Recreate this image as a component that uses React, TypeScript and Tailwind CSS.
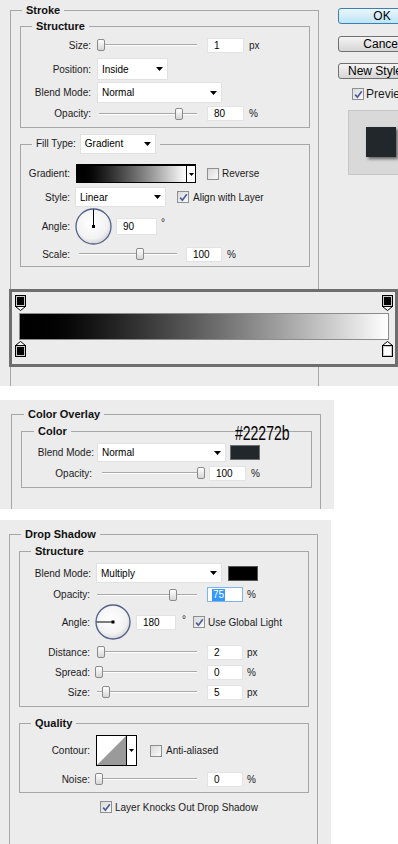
import React from 'react';

type Kids = { children?: React.ReactNode; className?: string };

const Group = ({ title, className = '', legendClass = 'ml-[11px]', children }: Kids & { title: React.ReactNode; legendClass?: string }) => (
  <fieldset className={`border border-[#a6a6a6] ${className}`}>
    <legend className={`${legendClass} px-[4px] text-[11px] font-bold leading-[12px] text-[#111]`}>{title}</legend>
    {children}
  </fieldset>
);

const Lbl = ({ className = '', children }: Kids) => (
  <span className={`shrink-0 text-right text-[10px] text-[#1b1b1b] ${className}`}>{children}</span>
);

const Slider = ({ className = '', thumb }: Kids & { thumb: number }) => (
  <div className={`relative h-[14px] flex items-center shrink-0 ${className}`}>
    <div className="h-[2px] w-full border-t border-[#a9a9a9] bg-white" />
    <div
      className="absolute top-[1px] h-[12px] w-[8px] rounded-[2px] border border-[#8a8a8a] bg-linear-to-b from-white to-[#d6d6d6]"
      style={{ left: thumb }}
    />
  </div>
);

const Field = ({ className = '', value }: Kids & { value: string }) => (
  <div className={`h-[15px] shrink-0 bg-white border border-[#e3e3e3] pl-[6px] text-[10px] leading-[13px] text-black ${className}`}>
    {value}
  </div>
);

const Arrow = () => (
  <svg width="7" height="4" viewBox="0 0 7 4">
    <path d="M0 0h7L3.5 4z" fill="#000" />
  </svg>
);

const Select = ({ className = '', value }: Kids & { value: string }) => (
  <div className={`flex shrink-0 items-center justify-between bg-white border border-[#e1e1e1] pl-[4px] pr-[4px] text-[10px] text-black ${className}`}>
    <span>{value}</span>
    <Arrow />
  </div>
);

const Check = ({ checked = false }: { checked?: boolean }) => (
  <div className="w-[12px] h-[12px] shrink-0 border border-[#8e8f8f] bg-linear-to-br from-[#d9d9d9] to-[#fbfbfb] flex items-center justify-center">
    {checked && (
      <svg width="9" height="9" viewBox="0 0 9 9">
        <path d="M1.2 4.6 L3.4 7.2 L7.8 1.2" fill="none" stroke="#4a5f97" strokeWidth="1.7" />
      </svg>
    )}
  </div>
);

const Dial = ({ size, dir, id }: { size: number; dir: 'up' | 'left'; id: string }) => {
  const c = size / 2;
  return (
    <svg width={size} height={size} viewBox={`0 0 ${size} ${size}`} className="shrink-0">
      <defs>
        <radialGradient id={id} cx="45%" cy="40%" r="60%">
          <stop offset="0%" stopColor="#ffffff" />
          <stop offset="75%" stopColor="#f2f2f2" />
          <stop offset="100%" stopColor="#d6d6d6" />
        </radialGradient>
      </defs>
      <circle cx={c} cy={c} r={c - 1} fill={`url(#${id})`} stroke="#52618a" strokeWidth="1.3" />
      {dir === 'up' ? (
        <line x1={c} y1={c} x2={c} y2={1.5} stroke="#000" strokeWidth="1" />
      ) : (
        <line x1={c} y1={c} x2={1.5} y2={c} stroke="#000" strokeWidth="1" />
      )}
      <rect x={c - 1.5} y={c - 1.5} width="3" height="3" fill="#000" />
    </svg>
  );
};

const TopStop = () => (
  <svg width="11" height="16" viewBox="0 0 11 16">
    <path d="M0.5 11.5 L5.5 15.5 L10.5 11.5" fill="#fff" stroke="#000" />
    <rect x="0.5" y="0.5" width="10" height="11" fill="#c8c8c8" stroke="#000" />
    <rect x="2" y="2" width="7" height="8" fill="#000" />
  </svg>
);

const BottomStop = ({ fill }: { fill: string }) => (
  <svg width="11" height="16" viewBox="0 0 11 16">
    <path d="M0.5 4.5 L5.5 0.5 L10.5 4.5" fill="#fff" stroke="#000" />
    <rect x="0.5" y="4.5" width="10" height="11" fill="#c8c8c8" stroke="#000" />
    <rect x="2" y="6" width="7" height="8" fill={fill} />
  </svg>
);

const Btn = ({ children, primary = false, className = '' }: Kids & { primary?: boolean }) => (
  <div
    className={`w-[88px] h-[16px] shrink-0 rounded-[3px] border text-[12px] leading-[14px] text-black ${
      primary
        ? 'border-[#3c7fb1] bg-linear-to-b from-[#eaf6fd] to-[#bde4f8]'
        : 'border-[#707070] bg-linear-to-b from-[#f4f4f4] to-[#d6d6d6]'
    } ${className}`}
  >
    {children}
  </div>
);

const StrokePanel = () => (
  <div className="h-[386px] w-full shrink-0 bg-[#ececec] flex flex-col overflow-hidden">
    <div className="flex h-[289px] shrink-0">
      <div className="w-[338px] shrink-0 pl-[10px] pt-[4px]">
        <Group title="Stroke" className="w-[309px] h-full border-b-0">
          <Group title="Structure" className="mt-[4px] ml-[9px] w-[290px] pb-[5px]">
            <div className="mt-[5px] h-[16px] flex items-center">
              <Lbl className="w-[70px]">Size:</Lbl>
              <Slider className="ml-[6px] w-[100px]" thumb={0} />
              <Field className="ml-[10px] w-[37px]" value="1" />
              <span className="ml-[5px] text-[10px]">px</span>
            </div>
            <div className="mt-[5px] h-[22px] flex items-center">
              <Lbl className="w-[70px]">Position:</Lbl>
              <Select className="ml-[6px] w-[71px] h-[22px]" value="Inside" />
            </div>
            <div className="mt-[2px] h-[21px] flex items-center">
              <Lbl className="w-[70px]">Blend Mode:</Lbl>
              <Select className="ml-[6px] w-[125px] h-[21px]" value="Normal" />
            </div>
            <div className="mt-[2px] h-[17px] flex items-center">
              <Lbl className="w-[70px]">Opacity:</Lbl>
              <Slider className="ml-[8px] w-[98px]" thumb={76} />
              <Field className="ml-[10px] w-[37px]" value="80" />
              <span className="ml-[5px] text-[10px]">%</span>
            </div>
          </Group>

          <Group
            className="mt-[6px] ml-[9px] w-[290px] pb-[4px]"
            legendClass="ml-[11px]"
            title={
              <div className="flex items-center h-[20px] font-normal">
                <span className="text-[10px] text-[#1b1b1b]">Fill Type:</span>
                <Select className="ml-[4px] w-[76px] h-[20px]" value="Gradient" />
              </div>
            }
          >
            <div className="mt-[10px] h-[19px] flex items-center">
              <Lbl className="w-[49px]">Gradient:</Lbl>
              <div className="ml-[6px] w-[120px] h-[19px] shrink-0 flex border-2 border-black border-r border-b">
                <div className="flex-1 bg-linear-to-r from-black to-white" />
                <div className="w-[9px] bg-white border-l border-black flex items-center justify-center">
                  <svg width="5" height="3" viewBox="0 0 5 3">
                    <path d="M0 0h5L2.5 3z" fill="#000" />
                  </svg>
                </div>
              </div>
              <div className="ml-[11px]">
                <Check />
              </div>
              <span className="ml-[3px] text-[10px]">Reverse</span>
            </div>
            <div className="mt-[4px] h-[20px] flex items-center">
              <Lbl className="w-[49px]">Style:</Lbl>
              <Select className="ml-[5px] w-[91px] h-[20px]" value="Linear" />
              <div className="ml-[11px]">
                <Check checked />
              </div>
              <span className="ml-[4px] text-[10px]">Align with Layer</span>
            </div>
            <div className="h-[39px] flex items-center">
              <Lbl className="w-[49px]">Angle:</Lbl>
              <div className="ml-[5px]">
                <Dial size={37} dir="up" id="dial1" />
              </div>
              <Field className="ml-[4px] w-[41px] h-[17px] leading-[15px]" value="90" />
              <span className="ml-[4px] self-start mt-[11px] text-[10px] leading-[10px]">°</span>
            </div>
            <div className="h-[16px] flex items-center">
              <Lbl className="w-[49px]">Scale:</Lbl>
              <Slider className="ml-[9px] w-[98px]" thumb={57} />
              <Field className="ml-[9px] w-[36px]" value="100" />
              <span className="ml-[5px] text-[10px]">%</span>
            </div>
          </Group>
        </Group>
      </div>

      <div className="flex-1 overflow-hidden pt-[8px] flex flex-col">
        <Btn primary className="text-center">OK</Btn>
        <Btn className="mt-[12px] text-center">Cancel</Btn>
        <Btn className="mt-[11px] pl-[9px]">New Style...</Btn>
        <div className="mt-[9px] ml-[14px] h-[12px] flex items-center">
          <Check checked />
          <span className="ml-[2px] text-[12px] whitespace-nowrap">Preview</span>
        </div>
        <div className="mt-[10px] ml-[10px] w-[70px] h-[65px] shrink-0 bg-[#d9d9d9] border border-[#c6c6c6] pt-[16px] pl-[17px]">
          <div className="w-[30px] h-[30px] bg-[#22272b] shadow-[2px_2px_3px_rgba(0,0,0,0.55)]" />
        </div>
      </div>
    </div>

    <div className="ml-[9px] w-[389px] h-[78px] shrink-0 border-[3px] border-[#6e6e6e] bg-[#ececec] flex flex-col">
      <div className="mt-[3px] h-[16px] pl-[3px] pr-[2px] flex justify-between">
        <TopStop />
        <TopStop />
      </div>
      <div className="mt-[2px] ml-[7px] mr-[6px] h-[27px] border border-[#8c8c8c] bg-linear-to-r from-black to-white" />
      <div className="mt-[1px] h-[16px] pl-[3px] pr-[2px] flex justify-between">
        <BottomStop fill="#000" />
        <BottomStop fill="#fff" />
      </div>
    </div>

    <div className="ml-[10px] w-[309px] flex-1 border-l border-r border-[#a6a6a6]" />
  </div>
);

const OverlayPanel = () => (
  <div className="relative mt-[14px] w-[334px] h-[109px] shrink-0 bg-[#ececec] pl-[11px] pt-[8px] overflow-hidden">
    <Group title="Color Overlay" legendClass="ml-[12px]" className="w-[310px] h-full border-b-0">
      <Group title="Color" legendClass="ml-[12px]" className="mt-[5px] ml-[9px] w-[291px] pb-[6px]">
        <div className="mt-[6px] h-[19px] flex items-center">
          <Lbl className="w-[72px]">Blend Mode:</Lbl>
          <Select className="ml-[3px] w-[129px] h-[19px]" value="Normal" />
          <div className="ml-[4px] w-[30px] h-[15px] shrink-0 bg-[#22272b] border border-[#6f6f6f]" />
        </div>
        <div className="mt-[3px] h-[16px] flex items-center">
          <Lbl className="w-[70px]">Opacity:</Lbl>
          <Slider className="ml-[10px] w-[102px]" thumb={95} />
          <Field className="ml-[5px] w-[37px]" value="100" />
          <span className="ml-[5px] text-[10px]">%</span>
        </div>
      </Group>
    </Group>
    <span className="absolute left-[235px] top-[23px] text-[20px] leading-[20px] origin-left scale-x-[0.7] text-black whitespace-nowrap">
      #22272b
    </span>
  </div>
);

const ShadowPanel = () => (
  <div className="mt-[11px] w-[331px] flex-1 bg-[#ececec] pl-[9px] pt-[8px] overflow-hidden">
    <Group title="Drop Shadow" className="w-[309px] h-full border-b-0">
      <Group title="Structure" className="mt-[5px] ml-[9px] w-[290px] pb-[6px]">
        <div className="mt-[6px] h-[20px] flex items-center">
          <Lbl className="w-[71px]">Blend Mode:</Lbl>
          <Select className="ml-[5px] w-[126px] h-[20px]" value="Multiply" />
          <div className="ml-[6px] w-[30px] h-[15px] shrink-0 bg-black border border-[#555]" />
        </div>
        <div className="mt-[3px] h-[17px] flex items-center">
          <Lbl className="w-[70px]">Opacity:</Lbl>
          <Slider className="ml-[7px] w-[100px]" thumb={72} />
          <div className="ml-[10px] w-[36px] h-[15px] shrink-0 bg-white border border-[#7eb4ea] pl-[4px] flex items-center">
            <span className="bg-[#3399ff] text-white text-[10px] leading-[12px] px-[1px]">75</span>
          </div>
          <span className="ml-[4px] text-[10px]">%</span>
        </div>
        <div className="h-[38px] flex items-center">
          <Lbl className="w-[70px]">Angle:</Lbl>
          <div className="ml-[5px]">
            <Dial size={36} dir="left" id="dial2" />
          </div>
          <Field className="ml-[5px] w-[40px]" value="180" />
          <span className="ml-[6px] self-start mt-[12px] text-[10px] leading-[10px]">°</span>
          <div className="ml-[7px]">
            <Check checked />
          </div>
          <span className="ml-[3px] text-[10px]">Use Global Light</span>
        </div>
        <div className="mt-[3px] h-[16px] flex items-center">
          <Lbl className="w-[70px]">Distance:</Lbl>
          <Slider className="ml-[7px] w-[100px]" thumb={0} />
          <Field className="ml-[10px] w-[36px]" value="2" />
          <span className="ml-[4px] text-[10px]">px</span>
        </div>
        <div className="mt-[4px] h-[16px] flex items-center">
          <Lbl className="w-[70px]">Spread:</Lbl>
          <Slider className="ml-[7px] w-[100px]" thumb={-2} />
          <Field className="ml-[10px] w-[36px]" value="0" />
          <span className="ml-[4px] text-[10px]">%</span>
        </div>
        <div className="mt-[4px] h-[16px] flex items-center">
          <Lbl className="w-[70px]">Size:</Lbl>
          <Slider className="ml-[7px] w-[100px]" thumb={5} />
          <Field className="ml-[10px] w-[36px]" value="5" />
          <span className="ml-[4px] text-[10px]">px</span>
        </div>
      </Group>

      <Group title="Quality" className="mt-[10px] ml-[9px] w-[290px] pb-[5px]">
        <div className="mt-[6px] h-[31px] flex items-center">
          <Lbl className="w-[70px]">Contour:</Lbl>
          <div className="ml-[6px] w-[41px] h-[31px] shrink-0 border border-black flex bg-white">
            <svg width="29" height="29" viewBox="0 0 29 29" className="shrink-0">
              <path d="M0 29 L29 0 L29 29 Z" fill="#9a9a9a" />
            </svg>
            <div className="flex-1 border-l border-black flex items-center justify-center">
              <svg width="5" height="3" viewBox="0 0 5 3">
                <path d="M0 0h5L2.5 3z" fill="#000" />
              </svg>
            </div>
          </div>
          <div className="ml-[13px]">
            <Check />
          </div>
          <span className="ml-[4px] text-[10px]">Anti-aliased</span>
        </div>
        <div className="mt-[5px] h-[16px] flex items-center">
          <Lbl className="w-[70px]">Noise:</Lbl>
          <Slider className="ml-[7px] w-[100px]" thumb={-2} />
          <Field className="ml-[10px] w-[36px]" value="0" />
          <span className="ml-[4px] text-[10px]">%</span>
        </div>
      </Group>

      <div className="mt-[8px] ml-[90px] h-[12px] flex items-center">
        <Check checked />
        <span className="ml-[3px] text-[10px] text-[#1b1b1b]">Layer Knocks Out Drop Shadow</span>
      </div>
    </Group>
  </div>
);

export default function App() {
  return (
    <div className="w-[398px] h-[844px] bg-white overflow-hidden flex flex-col text-[#1b1b1b] [font-family:'Liberation_Sans',Arial,sans-serif]">
      <StrokePanel />
      <OverlayPanel />
      <ShadowPanel />
    </div>
  );
}
